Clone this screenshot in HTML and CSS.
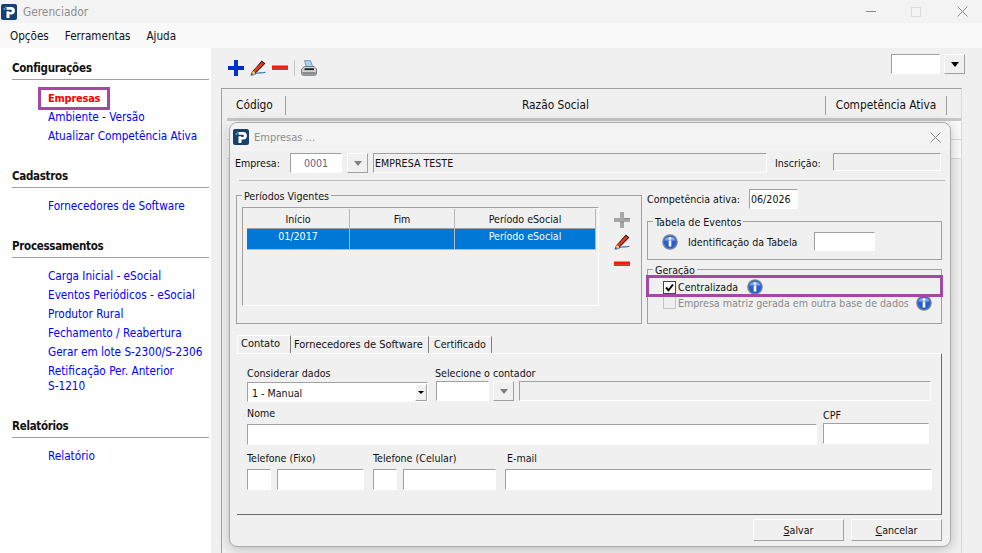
FILE: index.html
```html
<!DOCTYPE html>
<html lang="pt-BR">
<head>
<meta charset="utf-8">
<title>Gerenciador</title>
<link rel="stylesheet" href="styles.css">
</head>
<body>
<svg class="defs" width="0" height="0" aria-hidden="true">
  <defs>
    <symbol id="logo" viewBox="0 0 16 16">
      <rect width="16" height="16" rx="2" fill="#17406f"/>
      <path d="M5.500 3h4.700a3.600 3.600 0 0 1 0 7.400H8.500V14h-3V7.200h2.800v.8h1.500a1 1 0 0 0 0-2.200H5.500z" fill="#fff"/>
      <circle cx="3.400" cy="5" r="1" fill="#4da6e0"/>
      <circle cx="4.600" cy="3.200" r=".8" fill="#4da6e0"/>
    </symbol>
    <symbol id="plus" viewBox="0 0 16 16">
      <path d="M6 0h4v6h6v4h-6v6H6v-6H0V6h6z" fill="currentColor"/>
      <path d="M6 9.500h4v1H6zM10 6h6v1h-6z" fill="#000" opacity=".18"/>
    </symbol>
    <symbol id="pencil" viewBox="0 0 16 16">
      <path d="M.5 15c2.500.6 4.500-1.600 7.500-2 2.500-.3 4 .2 7.500-.8" fill="none" stroke="#2f6db5" stroke-width="1.100"/>
      <path d="M1 12.800 11.800.6 15.400 3.400 5 14z" fill="#3a0d08"/>
      <path d="M3.200 10.900 11.900 2l2 1.600-8.800 8.900z" fill="#e8401c"/>
      <path d="M1 12.800l2.200-1.900 1.900 1.600L5 14l-3.600 1z" fill="#f5cc63"/>
      <path d="M1 15l.6-2.200 1.500 1.500z" fill="#222"/>
    </symbol>
    <symbol id="minus" viewBox="0 0 16 16">
      <rect y="5.500" width="16" height="2.800" fill="#ff1a00"/>
      <rect y="8.300" width="16" height="1.500" fill="#b81000"/>
    </symbol>
    <symbol id="printer" viewBox="0 0 16 16">
      <path d="M3.500.6h6l2.500 7H5.500z" fill="#a9d2ee" stroke="#6d89a3" stroke-width=".8"/>
      <path d="M.6 9 3.500 6.500h9.500l2.500 2.500v4.500a1.800 1.800 0 0 1-1.800 1.800H2.400A1.800 1.800 0 0 1 .6 13.500z" fill="#d0d3d6" stroke="#5f6265" stroke-width=".8"/>
      <rect x="3.500" y="8.300" width="9.500" height="1.800" fill="#1c1c1c"/>
      <rect x="1.100" y="12" width="13.800" height="2.800" rx="1" fill="#8a8d90"/>
    </symbol>
    <symbol id="info" viewBox="0 0 16 16">
      <circle cx="8" cy="8" r="7.800" fill="#7f8794"/>
      <circle cx="8" cy="8" r="6.500" fill="#2a5fd0"/>
      <path d="M2.500 6.500a5.700 5 0 0 1 11 0z" fill="#86a6e6"/>
      <circle cx="8" cy="4.500" r="1.300" fill="#fff"/>
      <rect x="6.700" y="6.500" width="2.600" height="6" fill="#fff"/>
    </symbol>
  </defs>
</svg>

<div class="app">
  <header class="titlebar">
    <svg class="logo"><use href="#logo"/></svg>
    <span class="app-title">Gerenciador</span>
    <div class="win-controls">
      <span class="wc wc-min"></span>
      <span class="wc wc-max"></span>
      <svg class="wc-close" viewBox="0 0 11 11"><path d="M.5.500l10 10M10.500.500l-10 10" stroke="#8a8a8a" fill="none"/></svg>
    </div>
  </header>

  <nav class="menubar">
    <span>Opções</span>
    <span>Ferramentas</span>
    <span>Ajuda</span>
  </nav>

  <div class="body">
    <aside class="sidebar">
      <section class="side-group">
        <h2>Configurações</h2>
        <ul>
          <li><a class="active">Empresas</a></li>
          <li><a>Ambiente - Versão</a></li>
          <li><a>Atualizar Competência Ativa</a></li>
        </ul>
      </section>
      <section class="side-group">
        <h2>Cadastros</h2>
        <ul>
          <li><a>Fornecedores de Software</a></li>
        </ul>
      </section>
      <section class="side-group">
        <h2>Processamentos</h2>
        <ul>
          <li><a>Carga Inicial - eSocial</a></li>
          <li><a>Eventos Periódicos - eSocial</a></li>
          <li><a>Produtor Rural</a></li>
          <li><a>Fechamento / Reabertura</a></li>
          <li><a>Gerar em lote S-2300/S-2306</a></li>
          <li class="two-line"><a>Retificação Per. Anterior<br>S-1210</a></li>
        </ul>
      </section>
      <section class="side-group">
        <h2>Relatórios</h2>
        <ul>
          <li><a>Relatório</a></li>
        </ul>
      </section>
    </aside>

    <main class="main">
      <div class="toolbar">
        <svg class="tool tool-blue"><use href="#plus"/></svg>
        <svg class="tool"><use href="#pencil"/></svg>
        <svg class="tool"><use href="#minus"/></svg>
        <span class="tool-sep"></span>
        <svg class="tool"><use href="#printer"/></svg>
        <div class="toolbar-right">
          <span class="field filter-field"></span>
          <span class="combo-btn combo-btn-dark"><i></i></span>
        </div>
      </div>
      <div class="grid-panel">
        <div class="grid-head">
          <span class="col-code">Código</span>
          <span class="col-name">Razão Social</span>
          <span class="col-comp">Competência Ativa</span>
        </div>
        <div class="grid-band"></div>
        <div class="grid-row"></div>
        <div class="grid-row"></div>
      </div>
    </main>
  </div>

  <div class="dialog">
    <div class="dlg-title">
      <svg class="logo"><use href="#logo"/></svg>
      <span>Empresas ...</span>
      <svg class="dlg-close" viewBox="0 0 11 11"><path d="M.5.500l10 10M10.500.500l-10 10" stroke="#8a8a8a" fill="none"/></svg>
    </div>

    <div class="company-row">
      <label class="lbl-company">Empresa:</label>
      <span class="field code-field">0001</span>
      <span class="combo-btn"><i></i></span>
      <span class="field name-field">EMPRESA TESTE</span>
      <label class="lbl-inscr">Inscrição:</label>
      <span class="field inscr-field"></span>
    </div>
    <div class="divider"></div>

    <div class="upper">
      <fieldset class="box periods">
        <legend>Períodos Vigentes</legend>
        <div class="periods-inner">
          <div class="list">
            <div class="list-head">
              <span>Início</span><span>Fim</span><span>Período eSocial</span>
            </div>
            <div class="list-row">
              <span>01/2017</span><span></span><span>Período eSocial</span>
            </div>
          </div>
          <div class="side-tools">
            <svg class="tool tool-grey"><use href="#plus"/></svg>
            <svg class="tool"><use href="#pencil"/></svg>
            <svg class="tool"><use href="#minus"/></svg>
          </div>
        </div>
      </fieldset>

      <div class="right-col">
        <div class="comp-row">
          <label>Competência ativa:</label>
          <span class="field comp-field">06/2026</span>
        </div>
        <fieldset class="box events">
          <legend>Tabela de Eventos</legend>
          <div class="events-row">
            <svg class="info"><use href="#info"/></svg>
            <label>Identificação da Tabela</label>
            <span class="field id-field"></span>
          </div>
        </fieldset>
        <fieldset class="box generation">
          <legend>Geração</legend>
          <div class="check-row highlighted">
            <span class="check checked"><svg viewBox="0 0 11 11"><path d="M2 5.500l2.500 2.800L9 2.500" fill="none" stroke="#000" stroke-width="2"/></svg></span>
            <span>Centralizada</span>
            <svg class="info info-a"><use href="#info"/></svg>
          </div>
          <div class="check-row disabled">
            <span class="check"></span>
            <span>Empresa matriz gerada em outra base de dados</span>
            <svg class="info info-b"><use href="#info"/></svg>
          </div>
        </fieldset>
      </div>
    </div>

    <div class="tabs">
      <span class="tab tab-on">Contato</span>
      <span class="tab tab-2">Fornecedores de Software</span>
      <span class="tab tab-3">Certificado</span>
    </div>
    <div class="tab-panel">
      <div class="form-row row-a">
        <div class="f f-select">
          <label>Considerar dados</label>
          <span class="select"><span class="select-text">1 - Manual</span><span class="select-btn"><i></i></span></span>
        </div>
        <div class="f f-contador">
          <label>Selecione o contador</label>
          <div class="inline">
            <span class="field cont-code"></span>
            <span class="combo-btn"><i></i></span>
            <span class="field cont-name"></span>
          </div>
        </div>
      </div>
      <div class="form-row row-b">
        <div class="f f-nome">
          <label>Nome</label>
          <span class="field white nome-field"></span>
        </div>
        <div class="f f-cpf">
          <label>CPF</label>
          <span class="field white cpf-field"></span>
        </div>
      </div>
      <div class="form-row row-c">
        <div class="f">
          <label>Telefone (Fixo)</label>
          <div class="inline phone">
            <span class="field white ddd"></span>
            <span class="field white tel-a"></span>
          </div>
        </div>
        <div class="f">
          <label>Telefone (Celular)</label>
          <div class="inline phone">
            <span class="field white ddd"></span>
            <span class="field white tel-b"></span>
          </div>
        </div>
        <div class="f f-mail">
          <label>E-mail</label>
          <span class="field white mail"></span>
        </div>
      </div>
    </div>
    <div class="dlg-footer">
      <button type="button"><u>S</u>alvar</button>
      <button type="button"><u>C</u>ancelar</button>
    </div>
  </div>
</div>
</body>
</html>
```
FILE: styles.css
```css
* { box-sizing: border-box; }
html, body { margin: 0; height: 100%; }
body {
  font-family: "DejaVu Sans Condensed", "DejaVu Sans", sans-serif;
  font-stretch: condensed;
  font-size: 11.7px;
  color: #111;
  background: #f0f0f0;
  overflow: hidden;
}
.defs { position: absolute; }
.app { position: relative; width: 982px; height: 553px; display: flex; flex-direction: column; }

.titlebar { height: 23px; background: #f3f3f3; display: flex; align-items: center; padding-left: 1px; flex: none; }
.logo { width: 16px; height: 16px; flex: none; }
.app-title { margin-left: 6px; color: #8d8d8d; font-size: 11.8px; }
.win-controls { margin-left: auto; display: flex; align-items: center; }
.wc-min { width: 10px; height: 1px; background: #8a8a8a; margin-right: 35px; }
.wc-max { width: 10px; height: 10px; border: 1px solid #dcdcdc; margin-right: 36px; }
.wc-close { width: 11px; height: 11px; margin-right: 14px; }

.menubar { height: 25px; background: #f9f9f9; display: flex; align-items: center; gap: 16px; padding-left: 10px; font-size: 11.6px; flex: none; }

.body { flex: 1; display: flex; min-height: 0; }
.sidebar { width: 211px; flex: none; background: #fff; padding: 10px 2px 0 12px; }
.side-group { margin-bottom: 20px; }
.side-group h2 { margin: 0 0 9px; height: 22px; font-size: 11.5px; letter-spacing: -.3px; line-height: 20px; font-weight: 700; color: #111; border-bottom: 1px solid #a0a0a0; }
.side-group ul { list-style: none; margin: 0; padding: 0 0 0 36px; }
.side-group li { height: 19px; line-height: 19px; }
.side-group li.two-line { height: 34px; line-height: 15px; padding-top: 2px; }
.side-group a { color: #0000ff; }
.side-group a.active { display: inline-block; color: #ff0000; font-size: 11px; letter-spacing: -.25px; font-weight: 700; outline: 3px solid #a349a4; padding: 1px 7px 0; margin: 0 -7px; line-height: 16px; }

.main { flex: 1; min-width: 0; padding: 0 20px 0 10px; }
.toolbar { height: 40px; display: flex; align-items: center; gap: 6px; padding-left: 7px; position: relative; }
.tool { width: 16px; height: 16px; flex: none; }
.tool-blue { color: #0033cc; }
.tool-grey { color: #a6a6a6; }
.tool-sep { width: 1px; height: 16px; background: #c4c4c4; }
.toolbar-right { display: flex; gap: 4px; margin: -8px -3px 0 auto; }

.field { display: block; height: 20px; border: 1px solid #fff; border-top-color: #a0a0a0; border-left-color: #a0a0a0; flex: none; line-height: 18px; padding: 0 1px; white-space: nowrap; }
.white { background: #fff; height: 21px; }
.filter-field { width: 49px; background: #fff; }
.combo-btn { width: 21px; height: 20px; flex: none; border: 1px solid #a0a0a0; border-top-color: #fff; border-left-color: #fff; display: flex; align-items: center; justify-content: center; }
.combo-btn i { width: 0; height: 0; border: 4px solid transparent; border-top: 5px solid #808080; border-bottom: 0; }
.combo-btn-dark i { border-top-color: #000; }

.grid-panel { border: 1px solid #a0a0a0; border-right-color: #d8d8d8; border-bottom: 0; height: 465px; padding: 0 0 0 5px; }
.grid-head { display: flex; height: 29px; align-items: center; font-size: 11.8px; padding-top: 3px; }
.grid-head span { height: 19px; line-height: 19px; text-align: center; border-right: 1px solid #a0a0a0; }
.grid-head .col-code { width: 59px; text-align: left; padding-left: 9px; }
.col-name { width: 540px; }
.col-comp { width: 121px; }
.grid-band { height: 3px; background: #c8c8c8; }
.grid-row { height: 19px; border-bottom: 1px solid #d8d8d8; background: #fafafa; }

.dialog { position: absolute; left: 229px; top: 122px; width: 722px; height: 425px; font-size: 10.6px; background: #f0f0f0; border: 1px solid #ababab; border-radius: 8px; box-shadow: 0 2px 12px rgba(0,0,0,.22); display: flex; flex-direction: column; }
.dialog label, .dialog legend { white-space: nowrap; }
.dlg-title { height: 28px; flex: none; display: flex; align-items: center; background: #f3f3f3; border-radius: 8px 8px 0 0; padding-left: 3px; color: #8d8d8d; font-size: 11px; gap: 5px; }
.dlg-close { width: 11px; height: 11px; margin-left: auto; margin-right: 9px; }

.company-row { display: flex; align-items: center; margin-top: 2px; padding-left: 5px; height: 20px; }
.lbl-company { width: 55px; }
.code-field { width: 52px; text-align: center; color: #66668a; background: #fff; margin-right: 5px; }
.name-field { width: 394px; margin-left: 5px; padding-left: 1px; }
.lbl-inscr { margin-left: 8px; width: 58px; }
.inscr-field { width: 108px; height: 18px; margin-top: -2px; }
.divider { height: 1px; background: #bcbcbc; margin: 7px 5px 0 9px; flex: none; }

.upper { display: flex; margin: 8px 0 0 6px; gap: 5px; height: 135px; flex: none; }
.box { margin: 0; border: 1px solid #a0a0a0; padding: 0; min-width: 0; }
.box legend { padding: 0 2px; margin-left: 5px; line-height: 15px; height: 13px; }
.periods { width: 406px; height: 135px; margin-top: 0; }
.periods-inner { display: flex; padding: 5px 0 0 5px; }
.list { width: 357px; height: 99px; border: 1px solid #fff; border-top-color: #a0a0a0; border-left-color: #a0a0a0; padding: 1px 0 0 4px; }
.list-head, .list-row { display: grid; grid-template-columns: 103px 105px 141px; width: 349px; text-align: center; }
.list-head { height: 20px; line-height: 20px; border-bottom: 1px solid #a0a0a0; }
.list-head span { border-right: 1px solid #b8b8b8; }
.list-row { height: 21px; line-height: 15px; background: #0078d7; color: #fff; border-bottom: 1px solid #b8b8b8; }
.list-row span { border-right: 1px solid #b8b8b8; }
.side-tools { margin-left: 15px; display: flex; flex-direction: column; padding-top: 5px; gap: 6px; }

.right-col { width: 296px; flex: none; }
.comp-row { display: flex; align-items: center; height: 20px; }
.comp-row label { width: 102px; }
.comp-field { width: 49px; background: #fff; }
.events { height: 45px; margin-top: 6px; width: 295px; }
.events-row { display: flex; align-items: center; padding-left: 14px; margin-top: 4px; }
.info { width: 16px; height: 16px; flex: none; }
.events-row label { margin-left: 10px; width: 126px; }
.id-field { width: 61px; height: 19px; background: #fff; }
.generation { height: 61px; margin-top: 3px; width: 295px; }
.check-row { display: flex; align-items: center; height: 17px; padding-left: 15px; white-space: nowrap; }
.check { width: 13px; height: 13px; flex: none; border: 1px solid #c4c4c4; margin-right: 2px; }
.check.checked { background: #fff; border-color: #444; }
.check svg { display: block; width: 11px; height: 11px; }
.highlighted { height: 22px; margin: -1px -2px 0 -2px; padding: 2px 0 0 17px; outline: 3px solid #a349a4; outline-offset: -3px; }
.info-a { margin-left: 9px; }
.info-b { margin-left: 7px; }
.disabled { color: #8a8a8a; height: 17px; margin-top: -3px; }

.tabs { display: flex; margin: 11px 0 0 7px; height: 18px; flex: none; align-items: flex-end; font-size: 11px; }
.tab { height: 17px; line-height: 15px; border-right: 1px solid #808080; border-top: 1px solid #fff; padding: 0 2px 0 3px; white-space: nowrap; }
.tab-on { width: 54px; height: 18px; border-left: 1px solid #fff; background: #f0f0f0; }
.tab-2 { width: 138px; }
.tab-3 { width: 63px; font-size: 10.6px; padding-left: 5px; }
.tab-panel { margin-left: 7px; width: 705px; height: 162px; flex: none; border-top: 1px solid #fff; border-right: 1px solid #696969; border-bottom: 1px solid #696969; padding: 12px 0 0 10px; }

.form-row { display: flex; }
.f label { display: block; line-height: 15px; height: 15px; }
.inline { display: flex; }
.row-a { height: 37px; }
.f-select { width: 188px; }
.f-select label { height: 16px; }
.select { display: flex; width: 181px; height: 20px; background: #fff; border: 1px solid #fff; border-left-color: #a0a0a0; border-top-color: #a0a0a0; align-items: center; padding-left: 4px; justify-content: space-between; }
.select-text { padding-top: 2px; }
.select-btn { width: 12px; height: 17px; background: #f0f0f0; border: 1px solid #a0a0a0; border-top-color: #fff; border-left-color: #fff; display: flex; align-items: center; justify-content: center; }
.select-btn i { width: 0; height: 0; border: 3px solid transparent; border-top: 3px solid #000; border-bottom: 0; }
.f-contador .inline { margin-left: 1px; }
.cont-code { width: 53px; background: #fff; margin-right: 4px; }
.cont-name { width: 412px; margin-left: 5px; }
.row-b { margin-top: 1px; height: 45px; }
.f-nome { width: 576px; }
.f-nome label { height: 20px; line-height: 18px; }
.nome-field { width: 570px; }
.f-cpf { margin-top: 4px; }
.cpf-field { width: 106px; }
.row-c { gap: 9px; }
.row-c label { height: 20px; line-height: 18px; }
.phone { gap: 6px; }
.ddd { width: 24px; }
.tel-a { width: 87px; }
.tel-b { width: 93px; }
.mail { width: 427px; }
.f-mail label { padding-left: 2px; }

.dlg-footer { display: flex; justify-content: flex-end; gap: 7px; margin: 4px 8px 0 0; }
.dlg-footer button { width: 91px; height: 22px; font: inherit; color: #111; background: #f0f0f0; border: 1px solid #a0a0a0; border-top-color: #fff; border-left-color: #fff; padding: 0; }
```
